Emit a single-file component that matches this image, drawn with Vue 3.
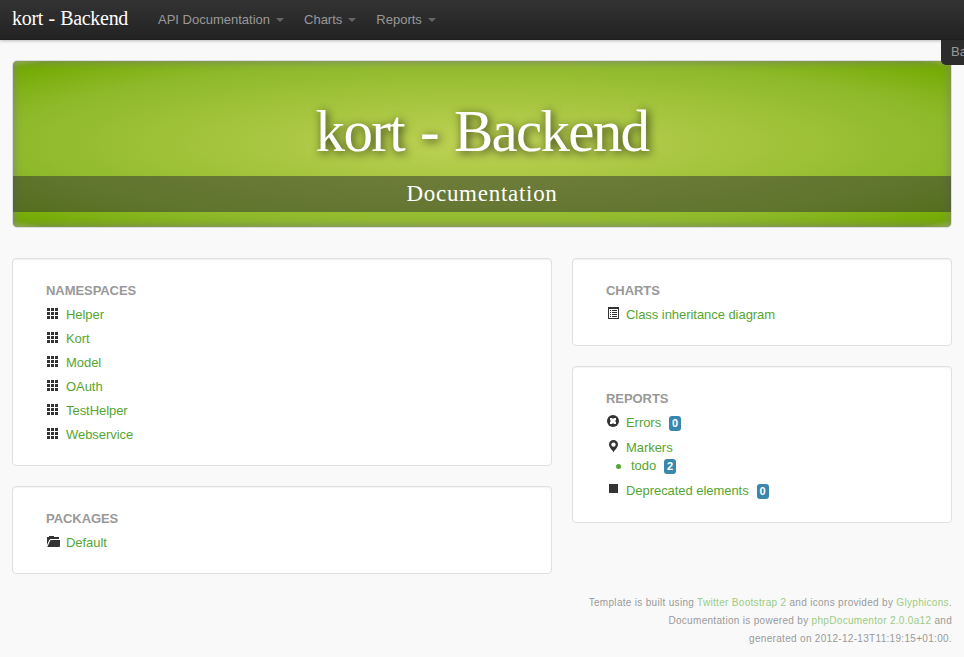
<script setup>
const menus = ['API Documentation', 'Charts', 'Reports']
const namespaces = ['Helper', 'Kort', 'Model', 'OAuth', 'TestHelper', 'Webservice']
</script>

<template>
  <div class="page">
    <header class="navbar">
      <a class="brand">kort - Backend</a>
      <nav class="menus">
        <a v-for="m in menus" :key="m" class="menu">{{ m }}<span class="caret"></span></a>
      </nav>
      <div class="side-tab">Ba</div>
    </header>

    <main class="container">
      <section class="hero">
        <h1>kort - Backend</h1>
        <h2>Documentation</h2>
      </section>

      <div class="row">
        <div class="col wide">
          <section class="well">
            <h3>Namespaces</h3>
            <ul>
              <li v-for="n in namespaces" :key="n">
                <svg class="icon" viewBox="0 0 14 14" shape-rendering="crispEdges">
                  <path fill="#333" d="M1 1h3v3H1zM5 1h3v3H5zM9 1h3v3H9zM1 5h3v3H1zM5 5h3v3H5zM9 5h3v3H9zM1 9h3v3H1zM5 9h3v3H5zM9 9h3v3H9z" />
                </svg>
                <a>{{ n }}</a>
              </li>
            </ul>
          </section>
          <section class="well">
            <h3>Packages</h3>
            <ul>
              <li>
                <svg class="icon" viewBox="0 0 14 14">
                  <path fill="#333" d="M1 2h2V1h5v1h5v2H4.200L3 5.500 1.200 9.800H1zM4.500 5H14v6l-.500 1H1.300z" />
                </svg>
                <a>Default</a>
              </li>
            </ul>
          </section>
        </div>

        <div class="col narrow">
          <section class="well">
            <h3>Charts</h3>
            <ul>
              <li>
                <svg class="icon" viewBox="0 0 14 14" shape-rendering="crispEdges">
                  <path fill="#333" fill-rule="evenodd" d="M2 0h11v12H2zM3 2v9h9V2zM4 3h1v1H4zM6 3h5v1H6zM4 5h1v1H4zM6 5h5v1H6zM4 7h1v1H4zM6 7h5v1H6zM4 9h1v1H4zM6 9h5v1H6z" />
                </svg>
                <a>Class inheritance diagram</a>
              </li>
            </ul>
          </section>
          <section class="well reports">
            <h3>Reports</h3>
            <ul>
              <li>
                <svg class="icon" viewBox="0 0 14 14">
                  <circle cx="7" cy="6" r="6" fill="#333" />
                  <path fill="#fff" d="M4 3h2l1 1 1-1h2v2L9 6l1 1v2H8L7 8 6 9H4V7l1-1-1-1z" />
                </svg>
                <a>Errors</a><span class="badge">0</span>
              </li>
              <li class="markers">
                <svg class="icon" viewBox="0 0 14 14">
                  <path fill="#333" fill-rule="evenodd" d="M7.500 0A4.500 4.500 0 0 1 12 4.500C12 7.500 9 9.500 7.500 12.300 6 9.500 3 7.500 3 4.500A4.500 4.500 0 0 1 7.500 0zM7.500 2.400a2.200 2.200 0 1 0 0 4.400 2.200 2.200 0 0 0 0-4.400z" />
                </svg>
                <a>Markers</a>
              </li>
              <li class="sub"><i class="dot"></i><a>todo</a><span class="badge">2</span></li>
              <li class="deprecated">
                <svg class="icon" viewBox="0 0 14 14" shape-rendering="crispEdges">
                  <path fill="#333" d="M3 1h9v9H3z" />
                </svg>
                <a>Deprecated elements</a><span class="badge">0</span>
              </li>
            </ul>
          </section>
        </div>
      </div>

      <footer>
        <div>Template is built using <a>Twitter Bootstrap 2</a> and icons provided by <a>Glyphicons</a>.</div>
        <div>Documentation is powered by <a>phpDocumentor 2.0.0a12</a> and</div>
        <div>generated on 2012-12-13T11:19:15+01:00.</div>
      </footer>
    </main>
  </div>
</template>

<style>
body {
  margin: 0;
  background: #f9f9f9;
}
</style>

<style scoped>
.page {
  height: 657px;
  overflow: hidden;
  background: #f9f9f9;
  font: 13px/18px "Liberation Sans", Arial, sans-serif;
  color: #333;
}
.navbar {
  position: relative;
  height: 40px;
  box-sizing: border-box;
  display: flex;
  padding-left: 12px;
  background: linear-gradient(#333, #222);
  box-shadow: 0 1px 3px rgba(0, 0, 0, 0.25), inset 0 -1px 0 rgba(0, 0, 0, 0.1);
}
.brand {
  width: 136px;
  color: #fff;
  font: 20px/20px "Liberation Serif", serif;
  letter-spacing: -0.3px;
  word-spacing: 0.7px;
  padding-top: 8px;
  white-space: nowrap;
}
.menus {
  display: flex;
}
.menu {
  display: flex;
  color: #999;
  padding: 11px 10px 0;
  line-height: 18px;
}
.caret {
  width: 0;
  height: 0;
  margin: 7px 0 0 6px;
  border: 4px solid transparent;
  border-top-color: #666;
  border-bottom: 0;
}
.side-tab {
  position: absolute;
  left: 941px;
  top: 40px;
  width: 100px;
  height: 25px;
  box-sizing: border-box;
  padding: 3px 10px;
  background: #2c2c2c;
  color: #999;
  border-radius: 0 0 0 5px;
}
.container {
  padding: 20px 12px 0;
}
.hero {
  height: 168px;
  box-sizing: border-box;
  border: 1px solid #ddd;
  border-radius: 5px;
  padding-top: 40px;
  text-align: center;
  color: #fff;
  background: radial-gradient(ellipse farthest-corner at center, #bfd255 0%, #8eb92a 72%, #72aa00 96%, #9ecb2d 100%);
  box-shadow: inset 0 0 10px #808080;
}
.hero h1 {
  margin: 0;
  height: 75px;
  font: 59px/60px "Liberation Serif", serif;
  letter-spacing: -1.7px;
  word-spacing: 3px;
  text-shadow: 2px 2px 10px rgba(0, 0, 0, 0.75);
}
.hero h2 {
  margin: 0;
  background: rgba(48, 48, 48, 0.5);
  font: 23px/35px "Liberation Serif", serif;
  height: 36px;
  letter-spacing: 0.72px;
}
.row {
  display: flex;
  gap: 20px;
  margin-top: 30px;
  height: 316px;
}
.wide {
  width: 540px;
}
.narrow {
  width: 380px;
}
.well {
  box-sizing: border-box;
  margin-bottom: 20px;
  padding: 23px 33px 18px;
  background: #fff;
  border: 1px solid #e0e0e0;
  border-radius: 4px;
  box-shadow: inset 0 1px 1px rgba(0, 0, 0, 0.05);
}
h3 {
  margin: 0;
  color: #999;
  font-size: 13px;
  line-height: 18px;
  letter-spacing: -0.06px;
  text-transform: uppercase;
  padding-bottom: 3px;
}
ul {
  list-style: none;
  margin: 0;
  padding: 0;
}
li {
  display: flex;
  align-items: flex-start;
  height: 24px;
  line-height: 24px;
}
li a {
  color: #55a532;
  letter-spacing: -0.05px;
}
.icon {
  width: 14px;
  height: 14px;
  margin: 4px 6px 0 0;
}
.badge {
  width: 12px;
  height: 15px;
  margin: 5px 0 0 8px;
  border-radius: 3px;
  background: #3a87ad;
  color: #fff;
  font-size: 11px;
  font-weight: bold;
  line-height: 15px;
  text-align: center;
}
.reports {
  height: 157px;
}
.markers {
  padding-top: 1px;
  height: 18px;
}
.sub .dot {
  width: 5px;
  height: 5px;
  border-radius: 50%;
  background: #55a532;
  margin: 10px 10px 0 10px;
}
.deprecated {
  padding-top: 1px;
}
footer {
  margin-top: 20px;
  text-align: right;
  font-size: 10px;
  line-height: 18px;
  letter-spacing: 0.31px;
  color: #999;
}
footer a {
  color: #99cc84;
}
</style>
